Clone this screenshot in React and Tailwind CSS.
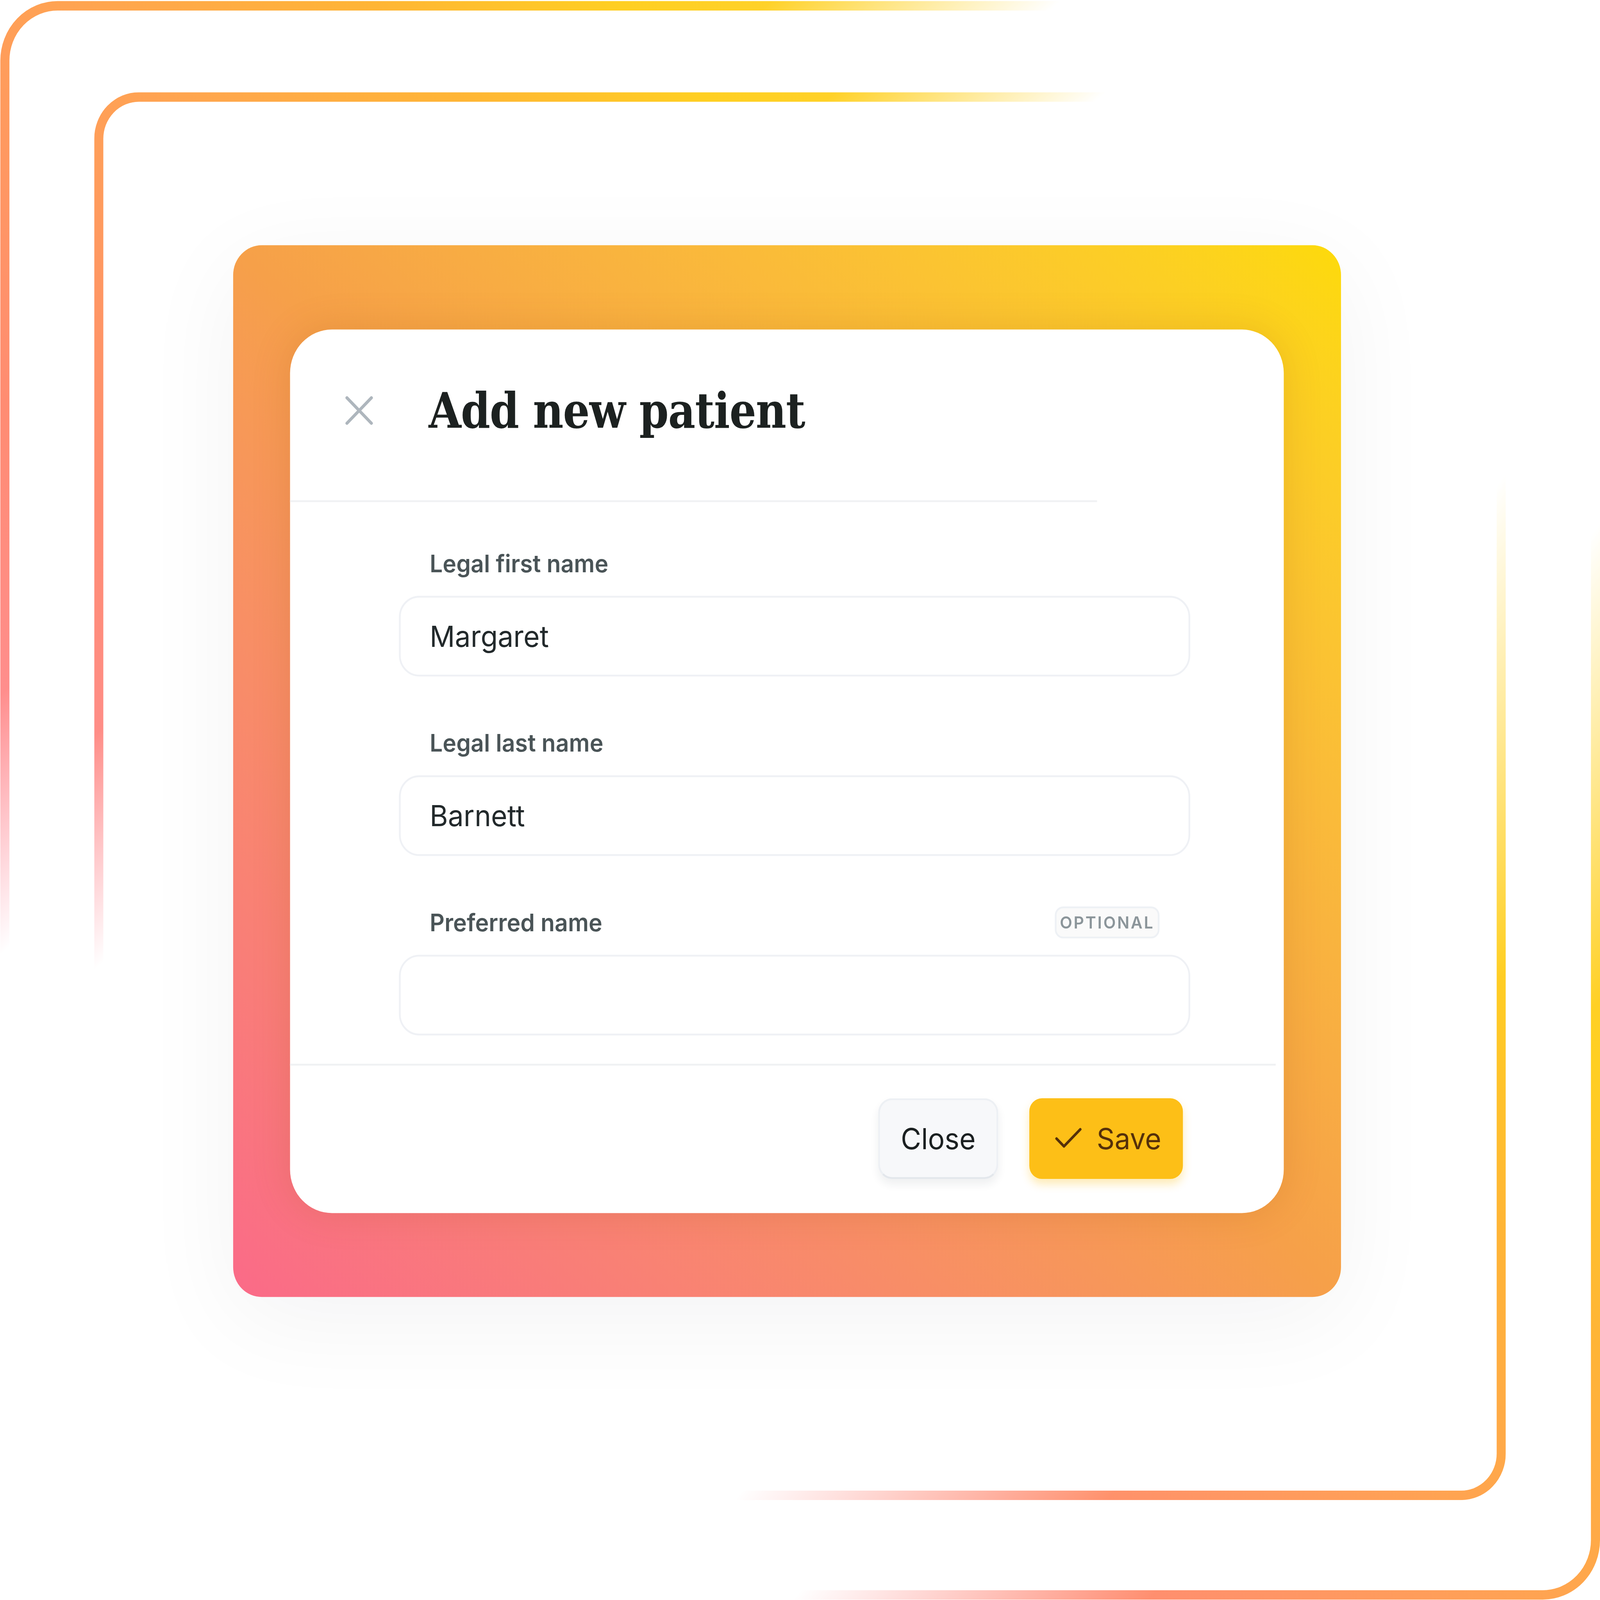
import React, { useEffect, useState } from "react";

const fields = [
  { label: "Legal first name", value: "Margaret" },
  { label: "Legal last name", value: "Barnett" },
  { label: "Preferred name", value: "", optional: true },
];

// design is drawn at 4584x4404, then fitted to the window
const DESIGN_W = 4584;
const DESIGN_H = 4404;

const useFit = () => {
  const read = () => ({
    x: window.innerWidth / DESIGN_W,
    y: window.innerHeight / DESIGN_H,
  });
  const [scale, setScale] = useState(read);

  useEffect(() => {
    const onResize = () => setScale(read());
    window.addEventListener("resize", onResize);
    return () => window.removeEventListener("resize", onResize);
  }, []);

  return scale;
};

// decorative gradient outlines behind the card
const Frames = () => (
  <svg
    className="absolute inset-0 pointer-events-none"
    width="4584"
    height="4404"
    viewBox="0 0 4584 4404"
    fill="none"
  >
    <defs>
      <linearGradient id="frameColor" gradientUnits="userSpaceOnUse" x1="0" y1="4404" x2="4584" y2="0">
        <stop offset="0.2" stopColor="#ff8fa3" />
        <stop offset="0.36" stopColor="#ff8c72" />
        <stop offset="0.5" stopColor="#ffa352" />
        <stop offset="0.6" stopColor="#ffb535" />
        <stop offset="0.68" stopColor="#ffcf22" />
        <stop offset="0.85" stopColor="#ffd83a" />
      </linearGradient>

      {/* fades for the top-left legs */}
      <linearGradient id="fadeOuterTL" x1="0" y1="0" x2="0.9" y2="1">
        <stop offset="0.24" stopColor="#fff" />
        <stop offset="0.33" stopColor="#000" />
      </linearGradient>
      <linearGradient id="fadeInnerTL" x1="0" y1="0" x2="0.87" y2="1">
        <stop offset="0.26" stopColor="#fff" />
        <stop offset="0.355" stopColor="#000" />
      </linearGradient>

      {/* fades for the bottom-right legs */}
      <linearGradient id="fadeOuterBR" x1="0" y1="0" x2="1" y2="0.75">
        <stop offset="0.797" stopColor="#000" />
        <stop offset="0.94" stopColor="#fff" />
      </linearGradient>
      <linearGradient id="fadeInnerBR" x1="0" y1="0" x2="1" y2="0.75">
        <stop offset="0.77" stopColor="#000" />
        <stop offset="0.94" stopColor="#fff" />
      </linearGradient>

      <mask id="maskOuterTL" maskUnits="userSpaceOnUse" x="0" y="0" width="4584" height="4404">
        <rect x="0" y="0" width="4584" height="4404" fill="url(#fadeOuterTL)" />
      </mask>
      <mask id="maskOuterBR" maskUnits="userSpaceOnUse" x="0" y="0" width="4584" height="4404">
        <rect x="0" y="0" width="4584" height="4404" fill="url(#fadeOuterBR)" />
      </mask>
      <mask id="maskInnerTL" maskUnits="userSpaceOnUse" x="0" y="0" width="4584" height="4404">
        <rect x="270" y="254" width="4044" height="3875" fill="url(#fadeInnerTL)" />
      </mask>
      <mask id="maskInnerBR" maskUnits="userSpaceOnUse" x="0" y="0" width="4584" height="4404">
        <rect x="270" y="254" width="4044" height="3875" fill="url(#fadeInnerBR)" />
      </mask>
    </defs>

    <rect x="14" y="16" width="4557" height="4374" rx="151" stroke="url(#frameColor)" strokeWidth="26" mask="url(#maskOuterTL)" />
    <rect x="14" y="16" width="4557" height="4374" rx="151" stroke="url(#frameColor)" strokeWidth="26" mask="url(#maskOuterBR)" />
    <rect x="283" y="267" width="4018" height="3849" rx="115" stroke="url(#frameColor)" strokeWidth="26" mask="url(#maskInnerTL)" />
    <rect x="283" y="267" width="4018" height="3849" rx="115" stroke="url(#frameColor)" strokeWidth="26" mask="url(#maskInnerBR)" />
  </svg>
);

const CloseIcon = () => (
  <svg width="80" height="80" viewBox="0 0 80 80" fill="none" className="shrink-0">
    <path d="M5 5 75 75M75 5 5 75" stroke="#aeb6bd" strokeWidth="8.5" strokeLinecap="round" />
  </svg>
);

const CheckIcon = () => (
  <svg width="102" height="102" viewBox="0 0 24 24" fill="none" className="shrink-0 -mx-[17px]">
    <path d="M20 6 9 17l-5-5" stroke="#55300a" strokeWidth="1.7" strokeLinecap="round" strokeLinejoin="round" />
  </svg>
);

const Field = ({ label, value, optional }) => (
  <div className="flex flex-col gap-[56px]">
    <div className="flex h-[66px] items-center justify-between px-[88px]">
      <span className="text-[66px] leading-none font-semibold text-[#4a5457]">{label}</span>
      {optional && (
        <span className="flex h-[88px] w-[300px] items-center justify-center rounded-[24px] border-[5px] border-[#eef1f5] bg-[#fafafa] text-[46px] leading-none font-semibold tracking-[0.09em] text-[#8b959a]">
          OPTIONAL
        </span>
      )}
    </div>
    <div className="flex h-[222px] items-center rounded-[58px] border-[5px] border-[#eff1f5] bg-white pl-[83px]">
      <span className="text-[80px] leading-none text-[#22292b]">{value}</span>
    </div>
  </div>
);

export default function App() {
  const scale = useFit();

  return (
    <div className="relative h-screen w-screen overflow-hidden bg-white">
      <div
        className="absolute left-0 top-0 h-[4404px] w-[4584px] origin-top-left bg-white font-['Inter','Liberation_Sans',sans-serif]"
        style={{ transform: `scale(${scale.x}, ${scale.y})` }}
      >
        <Frames />

        <div className="relative pl-[668px] pt-[675px]">
          {/* CARD */}
          <div className="w-[3174px] rounded-[82px] bg-linear-to-tr from-[#fa6a88] via-[#f6a049] to-[#fdda08] px-[163px] pt-[232px] pb-[231px] shadow-[0_60px_300px_rgba(15,23,42,0.05)]">
            {/* DIALOG */}
            <div className="w-[2847px] rounded-[120px] bg-white shadow-[0_0_110px_rgba(150,70,0,0.16)]">
              {/* HEADER */}
              <div className="flex h-[470px] items-center gap-[159px] pb-[25px] pl-[158px]">
                <CloseIcon />
                <h1 className="font-['DejaVu_Serif_Condensed','DejaVu_Serif',serif] font-stretch-condensed text-[134px] leading-none font-bold tracking-[-0.01em] text-[#1c2120]">
                  Add new patient
                </h1>
              </div>
              <div className="h-[5px] w-[2312px] bg-[#f0f1f3]" />

              {/* FORM */}
              <div className="flex flex-col gap-[150px] pt-[136px] pb-[78px] pl-[312px] pr-[268px]">
                {fields.map((field) => (
                  <Field key={field.label} {...field} />
                ))}
              </div>

              {/* FOOTER */}
              <div className="mr-[23px] h-[5px] bg-[#f0f1f3]" />
              <div className="flex justify-end gap-[89px] pt-[90px] pb-[94px] pr-[289px]">
                <button className="h-[222px] w-[344px] rounded-[40px] border-[5px] border-[#edf0f4] border-b-[#e3e7ec] bg-[#f7f8fa] text-[80px] leading-none text-[#1b2021] shadow-[0_14px_24px_rgba(30,41,59,0.07)]">
                  Close
                </button>
                <button className="flex h-[222px] w-[440px] items-center gap-[47px] rounded-[36px] bg-[#fdbf17] pl-[78px] text-[80px] leading-none text-[#55300a] shadow-[0_14px_24px_rgba(253,191,23,0.3)]">
                  <CheckIcon />
                  Save
                </button>
              </div>
            </div>
          </div>
        </div>
      </div>
    </div>
  );
}
